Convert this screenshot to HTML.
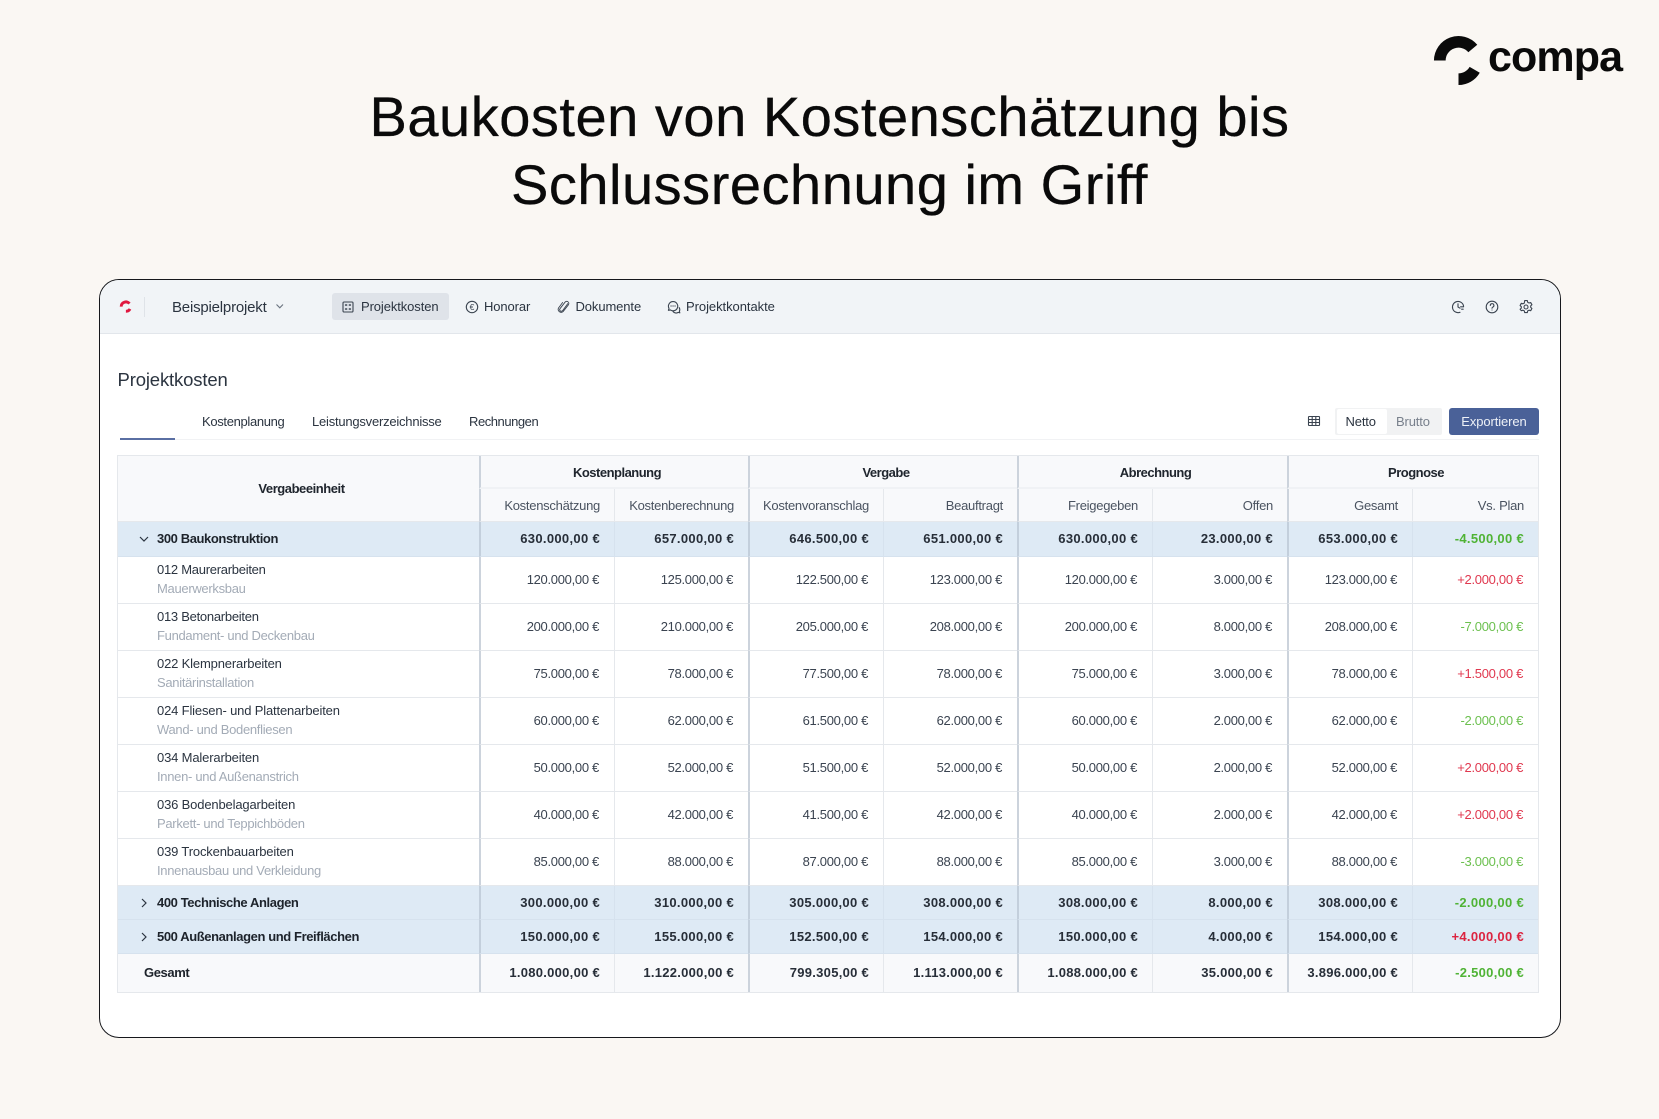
<!DOCTYPE html>
<html lang="de"><head><meta charset="utf-8"><title>Baukosten</title>
<style>
*{box-sizing:border-box}
html,body{margin:0;padding:0}
body{width:1659px;height:1119px;background:#faf7f3;position:relative;overflow:hidden;font-family:"Liberation Sans",sans-serif;color:#1f2937}
.a{position:absolute;white-space:nowrap}
h1{position:absolute;left:0;top:83px;width:1659px;margin:0;text-align:center;font-weight:400;font-size:56px;line-height:68px;letter-spacing:.52px;color:#0a0a0a;-webkit-text-stroke:.3px #0a0a0a}
.compa{left:1488px;top:31px;font-weight:700;font-size:43px;line-height:52px;letter-spacing:-.9px;color:#0a0a0a}
.card{position:absolute;left:99px;top:279px;width:1462px;height:759px;border:1.5px solid #16181c;border-radius:20px;background:#fff;overflow:hidden}
.bar{position:absolute;left:100px;top:280px;width:1460px;height:54px;background:#f1f4f7;border-bottom:1px solid #e2e6eb;border-radius:19px 19px 0 0}
.nav{font-size:13px;letter-spacing:-.1px;line-height:16px;top:299px;color:#2b3440}
.pill{position:absolute;left:332px;top:293px;width:117px;height:27px;background:#dfe3e9;border-radius:3px}
svg{position:absolute;overflow:visible}
.ic{fill:none;stroke:#3b4450;stroke-width:1.1;stroke-linecap:round;stroke-linejoin:round}
.tab{font-size:13px;letter-spacing:-.45px;line-height:16px;top:414px;color:#2b3440}
table{position:absolute;left:117px;top:455px;width:1422px;border-collapse:separate;border-spacing:0;table-layout:fixed;font-size:13px;border:1px solid #e5e8ec}
td,th{padding:0 15px 0 0;text-align:right;vertical-align:middle;overflow:hidden;white-space:nowrap;font-weight:400;border-bottom:1px solid #e5e8ec;border-left:1px solid #e5e8ec;line-height:16px;letter-spacing:-.3px;color:#3a4350}
td:first-child{border-left:0;text-align:left;padding:0 0 0 39px;letter-spacing:-.16px;color:#2b3440;position:relative}
td:nth-child(2),td:nth-child(4),td:nth-child(6),td:nth-child(8){border-left:2px solid #ccd3dc}
thead th{background:#f8f9fb;color:#4a5360;letter-spacing:-.27px;padding:1px 14px 0 0}
thead .gh{text-align:center;padding:2px 0 0 5px;font-weight:700;letter-spacing:-.5px;color:#20262e;border-left:2px solid #ccd3dc;border-bottom:2px solid #f0f2f5}
thead .vg{text-align:center;padding:0 0 0 6px;font-weight:700;letter-spacing:-.45px;color:#20262e;border-left:0}
thead .g{border-left:2px solid #ccd3dc}
tr.b td{background:#deeaf5;font-weight:700;letter-spacing:.32px;color:#272e38;border-bottom-color:#d6e2ee;border-left-color:#d6e2ee;padding-right:14px}
tr.b td:nth-child(2),tr.b td:nth-child(4),tr.b td:nth-child(6),tr.b td:nth-child(8){border-left-color:#c3cfdc}
tr.b td:first-child{letter-spacing:-.4px;color:#1d232b}
tr.i td{height:47px}
tr.t td{background:#f8f9fb;font-weight:700;letter-spacing:.28px;color:#272e38;border-bottom:0;padding-right:14px}
tr.t td:first-child{letter-spacing:-.4px;padding-left:26px;color:#1d232b}
.n{display:block;line-height:16px;margin-top:-1px}
.s{display:block;line-height:16px;margin-top:3px;color:#a3abb6;letter-spacing:-.3px}
td.gr{color:#6cc04f}
td.rd{color:#e0384f}
tr.b td.gr,tr.t td.gr{color:#4fb335}
tr.b td.rd{color:#dc2440}
td svg{left:20px;top:50%;margin-top:-6px}
</style></head><body>
<h1>Baukosten von Kostenschätzung bis<br>Schlussrechnung im Griff</h1>
<svg style="left:0;top:0" width="1659" height="120" fill="none" stroke="#0a0a0a" stroke-width="11.7"><path d="M1439.8 60.5A18.7 18.7 0 0 1 1472.8 48.5"/><path d="M1474.7 69.85A18.7 18.7 0 0 1 1458.5 79.2"/></svg>
<div class="a compa">compa</div>

<div class="card"></div>
<div class="bar"></div>
<svg style="left:118px;top:299px" width="16" height="16" fill="none" stroke="#e0173f" stroke-width="2.9"><path d="M3.2 7.6A4.7 4.7 0 0 1 11.5 4.6"/><path d="M12 9.9A4.7 4.7 0 0 1 7.9 12.3"/></svg>
<div class="a" style="left:144px;top:297px;width:1px;height:20px;background:#dfe3e8"></div>
<div class="a" style="left:172px;top:299px;font-size:15px;line-height:18px;letter-spacing:-.2px;color:#2b3440">Beispielprojekt</div>
<svg style="left:275px;top:303px" width="10" height="7"><path d="M1.5 1.5L4.8 4.8L8 1.5" fill="none" stroke="#6b7480" stroke-width="1.1"/></svg>
<div class="pill"></div>
<svg class="ic" style="left:342px;top:301px" width="12" height="12"><rect x="1" y="1" width="10" height="10" rx="1"/><path d="M3.6 4h1M7.4 4h1M3.6 8h1M7.4 8h1" stroke-width="1.5"/></svg>
<div class="a nav" style="left:361px">Projektkosten</div>
<svg class="ic" style="left:465px;top:300px" width="14" height="14"><circle cx="7" cy="7" r="5.7"/><text x="7" y="10" text-anchor="middle" font-family="Liberation Sans" font-size="8.5" fill="#3b4450" stroke="none">€</text></svg>
<div class="a nav" style="left:484px">Honorar</div>
<svg class="ic" style="left:557px;top:300px" width="13" height="14"><path d="M10.8 3.6L5.6 10.6a1.6 1.6 0 0 1-2.6-1.9L8 2.2a1 1 0 0 1 3.4 2.6L6 11.7a3 3 0 0 1-4.5-3.7L5.6 2.5" stroke-width=".9"/></svg>
<div class="a nav" style="left:575.5px">Dokumente</div>
<svg class="ic" style="left:667px;top:300px" width="14" height="14"><path d="M6 1.6a4.6 4.6 0 0 0-4 6.8L1.4 10.3l2-.4A4.6 4.6 0 1 0 6 1.6z"/><path d="M6 11.5a4 4 0 0 0 5.3 .9l1.5 .4-.4-1.5a4 4 0 0 0-.2-3.7"/><path d="M4 6h.1M6 6h.1M8 6h.1" stroke-width="1.2"/></svg>
<div class="a nav" style="left:686px;letter-spacing:-.05px">Projektkontakte</div>
<svg class="ic" style="left:1451px;top:299.5px" width="14" height="14"><path d="M12.6 6.2A5.6 5.6 0 1 0 9 12.3M7 3.8V7L9 8.2M9.6 6.8h3M10.6 9.2h1.6"/></svg>
<svg class="ic" style="left:1485px;top:299.5px" width="14" height="14"><circle cx="7" cy="7" r="5.8"/><path d="M5.3 5.5A1.8 1.8 0 1 1 7.8 7.1C7.2 7.4 7 7.7 7 8.3M7 10h.01"/></svg>
<svg class="ic" style="left:1519px;top:299.5px" width="14" height="14"><path d="M5.7 1.2h2.6l.4 1.7 1.3.7 1.7-.5 1.2 2.2-1.2 1.2v1.4l1.2 1.2-1.2 2.2-1.7-.5-1.3.7-.4 1.7H5.7l-.4-1.7-1.3-.7-1.7.5L1.1 9.9l1.2-1.2V7.3L1.1 6.1l1.2-2.2 1.7.5 1.3-.7z" transform="translate(0 -.6)"/><circle cx="7" cy="7" r="2"/></svg>

<div class="a" style="left:117.5px;top:369px;font-size:18.5px;line-height:22px;letter-spacing:-.15px;color:#2b3440">Projektkosten</div>
<div class="a tab" style="left:202px;letter-spacing:-.33px">Kostenplanung</div>
<div class="a tab" style="left:312px;letter-spacing:-.22px">Leistungsverzeichnisse</div>
<div class="a tab" style="left:469px">Rechnungen</div>
<div class="a" style="left:120px;top:439px;width:1419px;height:1px;background:#f1f2f4"></div>
<div class="a" style="left:120px;top:438px;width:55px;height:2px;background:#5a6fa3"></div>
<svg class="ic" style="left:1308px;top:415px" width="12" height="12"><rect x=".5" y="1.5" width="11" height="9" rx=".6"/><path d="M.5 4.5h11M.5 7.5h11M4.2 1.5v9M7.8 1.5v9"/></svg>
<div class="a" style="left:1335px;top:407.5px;width:107px;height:27.5px;background:#f1f2f3;border-radius:2px"></div>
<div class="a" style="left:1336.5px;top:409px;width:50.5px;height:24.5px;background:#fff;border-radius:2px"></div>
<div class="a" style="left:1345.5px;top:414px;font-size:13px;line-height:16px;letter-spacing:-.15px;color:#2b3440">Netto</div>
<div class="a" style="left:1396px;top:414px;font-size:13px;line-height:16px;letter-spacing:-.15px;color:#78808c">Brutto</div>
<div class="a" style="left:1449px;top:407.5px;width:90px;height:27px;background:#4a6198;border-radius:3px;color:#eef1f7;font-size:13px;line-height:27px;text-align:center;letter-spacing:-.1px">Exportieren</div>

<table>
<colgroup><col style="width:361px"><col style="width:135px"><col style="width:134px"><col style="width:135px"><col style="width:134px"><col style="width:135px"><col style="width:135px"><col style="width:125px"><col style="width:126px"></colgroup>
<thead>
<tr style="height:33px"><th class="vg" rowspan="2">Vergabeeinheit</th><th class="gh" colspan="2">Kostenplanung</th><th class="gh" colspan="2">Vergabe</th><th class="gh" colspan="2">Abrechnung</th><th class="gh" colspan="2">Prognose</th></tr>
<tr style="height:33px"><th class="g">Kostenschätzung</th><th>Kostenberechnung</th><th class="g">Kostenvoranschlag</th><th>Beauftragt</th><th class="g">Freigegeben</th><th>Offen</th><th class="g">Gesamt</th><th>Vs. Plan</th></tr>
</thead>
<tbody>
<tr class="b" style="height:35px"><td><svg width="12" height="12"><path d="M2 4l4 4 4-4" fill="none" stroke="#2b3440" stroke-width="1.2"/></svg>300 Baukonstruktion</td><td>630.000,00 €</td><td>657.000,00 €</td><td>646.500,00 €</td><td>651.000,00 €</td><td>630.000,00 €</td><td>23.000,00 €</td><td>653.000,00 €</td><td class="gr">-4.500,00 €</td></tr>
<tr class="i"><td><span class="n" style="letter-spacing:-.27px">012 Maurerarbeiten</span><span class="s">Mauerwerksbau</span></td><td>120.000,00 €</td><td>125.000,00 €</td><td>122.500,00 €</td><td>123.000,00 €</td><td>120.000,00 €</td><td>3.000,00 €</td><td>123.000,00 €</td><td class="rd">+2.000,00 €</td></tr>
<tr class="i"><td><span class="n" style="letter-spacing:-.27px">013 Betonarbeiten</span><span class="s">Fundament- und Deckenbau</span></td><td>200.000,00 €</td><td>210.000,00 €</td><td>205.000,00 €</td><td>208.000,00 €</td><td>200.000,00 €</td><td>8.000,00 €</td><td>208.000,00 €</td><td class="gr">-7.000,00 €</td></tr>
<tr class="i"><td><span class="n">022 Klempnerarbeiten</span><span class="s">Sanitärinstallation</span></td><td>75.000,00 €</td><td>78.000,00 €</td><td>77.500,00 €</td><td>78.000,00 €</td><td>75.000,00 €</td><td>3.000,00 €</td><td>78.000,00 €</td><td class="rd">+1.500,00 €</td></tr>
<tr class="i"><td><span class="n">024 Fliesen- und Plattenarbeiten</span><span class="s">Wand- und Bodenfliesen</span></td><td>60.000,00 €</td><td>62.000,00 €</td><td>61.500,00 €</td><td>62.000,00 €</td><td>60.000,00 €</td><td>2.000,00 €</td><td>62.000,00 €</td><td class="gr">-2.000,00 €</td></tr>
<tr class="i"><td><span class="n">034 Malerarbeiten</span><span class="s">Innen- und Außenanstrich</span></td><td>50.000,00 €</td><td>52.000,00 €</td><td>51.500,00 €</td><td>52.000,00 €</td><td>50.000,00 €</td><td>2.000,00 €</td><td>52.000,00 €</td><td class="rd">+2.000,00 €</td></tr>
<tr class="i"><td><span class="n">036 Bodenbelagarbeiten</span><span class="s">Parkett- und Teppichböden</span></td><td>40.000,00 €</td><td>42.000,00 €</td><td>41.500,00 €</td><td>42.000,00 €</td><td>40.000,00 €</td><td>2.000,00 €</td><td>42.000,00 €</td><td class="rd">+2.000,00 €</td></tr>
<tr class="i"><td><span class="n">039 Trockenbauarbeiten</span><span class="s">Innenausbau und Verkleidung</span></td><td>85.000,00 €</td><td>88.000,00 €</td><td>87.000,00 €</td><td>88.000,00 €</td><td>85.000,00 €</td><td>3.000,00 €</td><td>88.000,00 €</td><td class="gr">-3.000,00 €</td></tr>
<tr class="b" style="height:34px"><td><svg width="12" height="12"><path d="M4 2l4 4-4 4" fill="none" stroke="#2b3440" stroke-width="1.2"/></svg>400 Technische Anlagen</td><td>300.000,00 €</td><td>310.000,00 €</td><td>305.000,00 €</td><td>308.000,00 €</td><td>308.000,00 €</td><td>8.000,00 €</td><td>308.000,00 €</td><td class="gr">-2.000,00 €</td></tr>
<tr class="b" style="height:34px"><td><svg width="12" height="12"><path d="M4 2l4 4-4 4" fill="none" stroke="#2b3440" stroke-width="1.2"/></svg>500 Außenanlagen und Freiflächen</td><td>150.000,00 €</td><td>155.000,00 €</td><td>152.500,00 €</td><td>154.000,00 €</td><td>150.000,00 €</td><td>4.000,00 €</td><td>154.000,00 €</td><td class="rd">+4.000,00 €</td></tr>
<tr class="t" style="height:38px"><td>Gesamt</td><td>1.080.000,00 €</td><td>1.122.000,00 €</td><td>799.305,00 €</td><td>1.113.000,00 €</td><td>1.088.000,00 €</td><td>35.000,00 €</td><td>3.896.000,00 €</td><td class="gr">-2.500,00 €</td></tr>
</tbody>
</table>
</body></html>
